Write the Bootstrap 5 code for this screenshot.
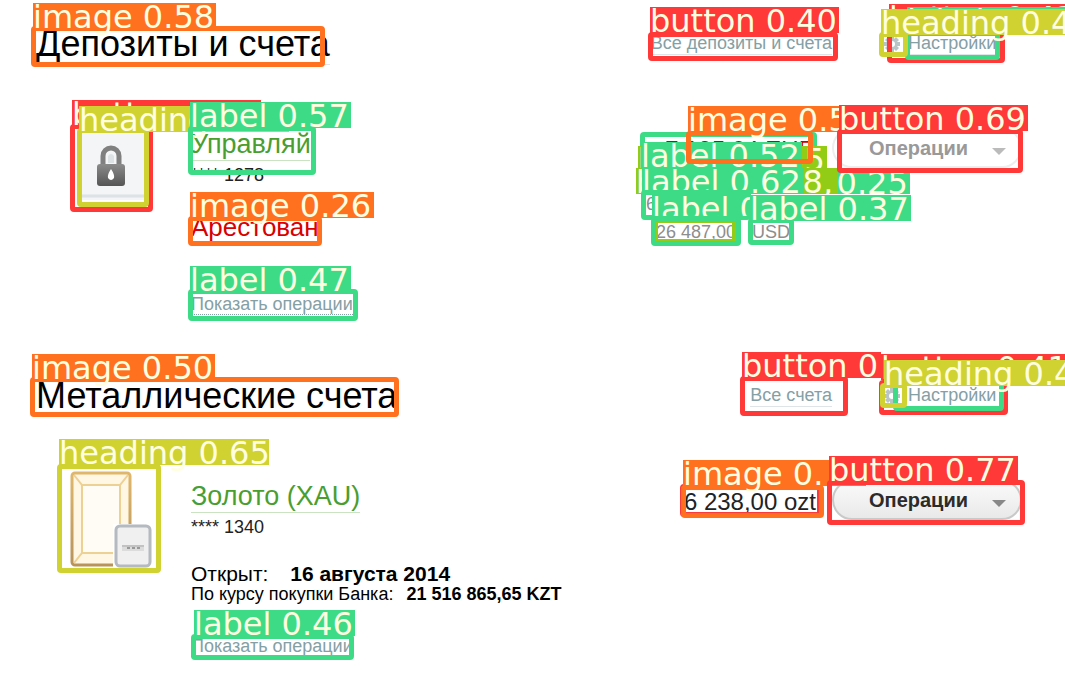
<!DOCTYPE html>
<html lang="ru">
<head>
<meta charset="utf-8">
<meta name="viewport" content="width=device-width, initial-scale=1">
<title>Депозиты и счета</title>
<link href="https://cdn.jsdelivr.net/npm/bootstrap@5.3.0/dist/css/bootstrap.min.css" rel="stylesheet">
<style>
  body { font-family: "Liberation Sans", Arial, sans-serif; color: #000; background: #fff; font-size: 18px; line-height: 20px; }
  .accounts { position: relative; min-height: 100vh; overflow: hidden; padding: 24px 43px 24px 36px; }
  .section-title { font-size: 36px; line-height: 40px; margin: 0; font-weight: 400; border-bottom: 1px solid #e4e4e4; }
  .section-head { min-height: 42px; }
  .quiet-link { color: #84a0a5; text-decoration: none; border-bottom: 1px solid #dfe5e6; line-height: 22px; }
  .dotted-link { color: #84a0a5; text-decoration: none; border-bottom: 1px dotted #84a0a5; line-height: 20px; }
  .tools { width: 138px; }
  .all-link { margin-right: 52px; }
  .picture { width: 155px; flex: none; }
  .lock-picture { padding-left: 44px; }
  .bar-picture { padding-left: 34px; }
  .acc-name { font-size: 27px; line-height: 32px; color: #4a9e2f; text-decoration: none; border-bottom: 1px solid #cbe3c3; }
  .short-name { width: 119px; overflow: hidden; white-space: nowrap; }
  .acc-number { color: #222; line-height: 28px; }
  .arrested { font-size: 26px; line-height: 32px; color: #d80000; margin-top: 22px; }
  .ops-link { margin-top: 51px; }
  .first-account { margin-top: 62px; height: 200px; }
  .second-account { margin-top: 52px; }
  .lowered { padding-top: 10px; }
  .opened { font-size: 21px; line-height: 20px; margin-top: 23px; }
  .sums { width: 170px; }
  .sum { font-size: 24px; line-height: 28px; color: #222; text-align: right; white-space: nowrap; }
  .sum-red { color: #c00; }
  .converted { color: #8d8d8d; }
  .converted-first { padding-top: 30px; }
  .converted-second { padding: 8px 0 0 10px; }
  .ops-button { width: 190px; height: 40px; border: 2px solid #c9c9c9; border-radius: 20px; background: linear-gradient(#fafafa, #e9e9e9); font-size: 20px; font-weight: 700; color: #2b2b2b; padding: 0 14px 0 35px; }
  .ops-button svg { margin-top: 6px; }
  .ops-button:disabled { opacity: 1; color: #999; background: #fff; border-color: #eee; }
  .mark-layer { position: absolute; top: 0; height: 100%; pointer-events: none; }
  .mark-left { left: 0; width: 600px; }
  .mark-right { right: 0; width: 435px; }
  .mark-box { position: absolute; border: 5px solid var(--tone); border-radius: 4px; }
  .mark-tag { position: absolute; height: 26px; background: var(--tone); color: #ffffe0; font: 32px/28px "DejaVu Sans", sans-serif; white-space: pre; }
  .mark-cut { overflow: hidden; }
  .tone-orange { --tone: #ff701f; }
  .tone-red { --tone: #ff3838; }
  .tone-olive { --tone: #cfd231; }
  .tone-green { --tone: #3ddb86; }
  .tone-lime { --tone: #92cc17; }
</style>
<script src="https://cdn.jsdelivr.net/npm/bootstrap@5.3.0/dist/js/bootstrap.bundle.min.js"></script>
</head>
<body>
<main class="accounts">
  <section>
    <header class="section-head d-flex align-items-start justify-content-between">
      <h1 class="section-title">Депозиты и счета</h1>
      <nav class="d-flex align-items-center pt-2">
        <a class="quiet-link all-link" href="#">Все депозиты и счета</a>
        <span class="tools d-flex align-items-center gap-2">
          <svg width="16" height="16" viewBox="0 0 16 16" aria-hidden="true"><path fill="#b9c4c6" d="M6 0h4v3l2-2 3 3-2 2h3v4h-3l2 2-3 3-2-2v3H6v-3l-2 2-3-3 2-2H0V6h3L1 4l3-3 2 2z"/><circle cx="8" cy="8" r="3" fill="#fff"/></svg>
          <a class="quiet-link" href="#">Настройки</a>
        </span>
      </nav>
    </header>
    <article class="first-account d-flex">
      <div class="picture lock-picture">
        <svg width="66" height="72" viewBox="0 0 66 72" aria-hidden="true"><defs><linearGradient id="metal" x2="0" y2="1"><stop stop-color="#8b8b8b"/><stop offset="1" stop-color="#555"/></linearGradient></defs><rect width="66" height="72" fill="#f3f5f6"/><path d="M0 68h66" stroke="#dce2e5" stroke-width="3"/><path d="M23 37V28a8 8 0 0 1 16 0v9" fill="none" stroke="#808080" stroke-width="5"/><path d="M28 35v-7q3-4 6 0v7" fill="#dde3e5"/><rect x="17" y="36" width="28" height="22" rx="3" fill="url(#metal)"/><path d="M31 41q-4 6-3 9 3 4 6 0 1-3-3-9z" fill="#fff"/></svg>
      </div>
      <div class="flex-grow-1 d-flex flex-column align-items-start">
        <a class="acc-name short-name" href="#">Управляй</a>
        <span class="acc-number">**** 1278</span>
        <span class="arrested">Арестован</span>
        <a class="dotted-link ops-link" href="#">Показать операции</a>
      </div>
      <div class="d-flex align-items-start gap-3">
        <div class="sums">
          <div class="sum sum-red pt-2">7 195,04 EUR</div>
          <div class="converted converted-first">6</div>
          <div class="converted converted-second d-flex gap-3"><span>26 487,00</span><span>USD</span></div>
        </div>
        <button class="ops-button d-flex align-items-center justify-content-between" type="button" disabled>Операции
          <svg width="14" height="7" viewBox="0 0 14 7" aria-hidden="true"><path d="M0 0h14L7 7z" fill="#bbb"/></svg>
        </button>
      </div>
    </article>
  </section>
  <section class="pt-4 mt-4">
    <header class="section-head d-flex align-items-start justify-content-between">
      <h2 class="section-title">Металлические счета</h2>
      <nav class="d-flex align-items-center pt-2">
        <a class="quiet-link all-link" href="#">Все счета</a>
        <span class="tools d-flex align-items-center gap-2">
          <svg width="16" height="16" viewBox="0 0 16 16" aria-hidden="true"><path fill="#b9c4c6" d="M6 0h4v3l2-2 3 3-2 2h3v4h-3l2 2-3 3-2-2v3H6v-3l-2 2-3-3 2-2H0V6h3L1 4l3-3 2 2z"/><circle cx="8" cy="8" r="3" fill="#fff"/></svg>
          <a class="quiet-link" href="#">Настройки</a>
        </span>
      </nav>
    </header>
    <article class="second-account d-flex">
      <div class="picture bar-picture">
        <svg width="82" height="98" viewBox="0 0 82 98" aria-hidden="true"><defs><linearGradient id="gold" x2="0" y2="1"><stop stop-color="#dfb76c"/><stop offset="1" stop-color="#b8935a"/></linearGradient></defs><rect x="2" y="3" width="58" height="92" rx="3" fill="#fff6e3" stroke="url(#gold)" stroke-width="3"/><path d="M4 5l8 10h38l8-10M4 93l8-10h38l8 10M12 14v69M50 14v69" fill="none" stroke="#edd093" stroke-width="2"/><path d="M13 16h36v66H13z" fill="#fffcf6"/><rect x="43" y="54" width="38" height="44" fill="#fff"/><rect x="46" y="56" width="34" height="40" rx="4" fill="#f0f0f0" stroke="#b4bac0" stroke-width="3"/><path d="M52 75h22v6H52z" fill="#dcdcdc"/><path d="M52 76h22" stroke="#a9a9a9"/><path d="M57 78h3m2 0h3m2 0h3" stroke="#999" stroke-width="2"/></svg>
      </div>
      <div class="lowered flex-grow-1 d-flex flex-column align-items-start">
        <a class="acc-name" href="#">Золото (XAU)</a>
        <span class="acc-number">**** 1340</span>
        <div class="opened">Открыт: <b class="ms-3">16 августа 2014</b></div>
        <div>По курсу покупки Банка: <b class="ms-2">21 516 865,65 KZT</b></div>
        <a class="dotted-link mt-4 pt-2" href="#">Показать операции</a>
      </div>
      <div class="lowered d-flex align-items-start gap-3">
        <div class="sum pt-2">6 238,00 ozt</div>
        <button class="ops-button d-flex align-items-center justify-content-between" type="button">Операции
          <svg width="14" height="7" viewBox="0 0 14 7" aria-hidden="true"><path d="M0 0h14L7 7z" fill="#888"/></svg>
        </button>
      </div>
    </article>
  </section>
  <div class="mark-layer mark-left" id="marksLeft"></div>
  <div class="mark-layer mark-right" id="marksRight"></div>
</main>
<script>
  // Detections in paint order: tone, box [x, y, w, h] or null, tag [x, y, w, cut height] or null, tag text
  const left = [
    ['orange', [31, 26, 294, 41], [33, 3, 183], 'image 0.58'],
    ['red', [70, 124, 83, 88], [72, 100, 189, 26], 'button 0.51'],
    ['olive', [77, 128, 72, 79], [79, 106, 210], 'heading 0.44'],
    ['green', [188, 126, 128, 49], [190, 102, 161], 'label 0.57'],
    ['orange', [188, 216, 134, 30], [190, 192, 184], 'image 0.26'],
    ['green', [188, 289, 170, 32], [190, 266, 161], 'label 0.47'],
    ['orange', [30, 377, 369, 40], [32, 354, 183], 'image 0.50'],
    ['olive', [57, 464, 104, 109], [59, 439, 210], 'heading 0.65'],
    ['green', [191, 634, 163, 26], [194, 610, 161], 'label 0.46']
  ];
  const right = [
    ['red', [18, 32, 190, 29], [20, 7, 189], 'button 0.40'],
    ['red', [257, 30, 118, 33], [259, 4, 189], 'button 0.43'],
    ['green', [275, 31, 95, 29], [277, 7, 161], 'label 0.54'],
    ['olive', [249, 32, 29, 25], [251, 9, 210], 'heading 0.47'],
    ['green', [10, 132, 177, 34], null, ''],
    ['lime', null, [8, 146, 189, 24], 'button 0.55'],
    ['green', null, [11, 142, 161], 'label 0.52'],
    ['orange', [56, 131, 127, 33], [58, 106, 183], 'image 0.56'],
    ['green', null, [119, 169, 161, 25], 'label 0.25'],
    ['lime', null, [6, 168, 202, 26], 'button 0.48,'],
    ['green', null, [12, 168, 162], 'label 0.62'],
    ['green', [11, 190, 110, 30], [22, 195, 98, 21], 'label 0.3'],
    ['lime', [23, 218, 84, 26], null, ''],
    ['green', [21, 217, 90, 29], null, ''],
    ['green', [118, 218, 46, 27], [120, 195, 161], 'label 0.37'],
    ['red', [207, 129, 186, 44], [209, 105, 189], 'button 0.69'],
    ['red', [249, 380, 129, 35], [251, 354, 189], 'button 0.41'],
    ['red', [110, 376, 108, 40], [112, 352, 139, 26], 'button 0'],
    ['green', [263, 380, 111, 31], null, ''],
    ['olive', [250, 383, 27, 25], [254, 360, 210], 'heading 0.44'],
    ['red', [50, 484, 142, 33], null, ''],
    ['orange', [51, 485, 143, 33], [53, 460, 183], 'image 0.'],
    ['red', [197, 480, 198, 45], [199, 456, 189], 'button 0.77']
  ];
  function paint(id, rows) {
    const layer = document.getElementById(id);
    for (const [tone, box, tag, text] of rows) {
      if (box) {
        const b = document.createElement('div');
        b.className = 'mark-box tone-' + tone;
        b.style.cssText = `left:${box[0]}px;top:${box[1]}px;width:${box[2]}px;height:${box[3]}px`;
        layer.append(b);
      }
      if (tag) {
        const t = document.createElement('div');
        t.className = 'mark-tag tone-' + tone + (tag[3] ? ' mark-cut' : '');
        t.style.cssText = `left:${tag[0]}px;top:${tag[1]}px;width:${tag[2]}px` + (tag[3] ? `;height:${tag[3]}px` : '');
        t.textContent = text;
        layer.append(t);
      }
    }
  }
  paint('marksLeft', left);
  paint('marksRight', right);
</script>
</body>
</html>
